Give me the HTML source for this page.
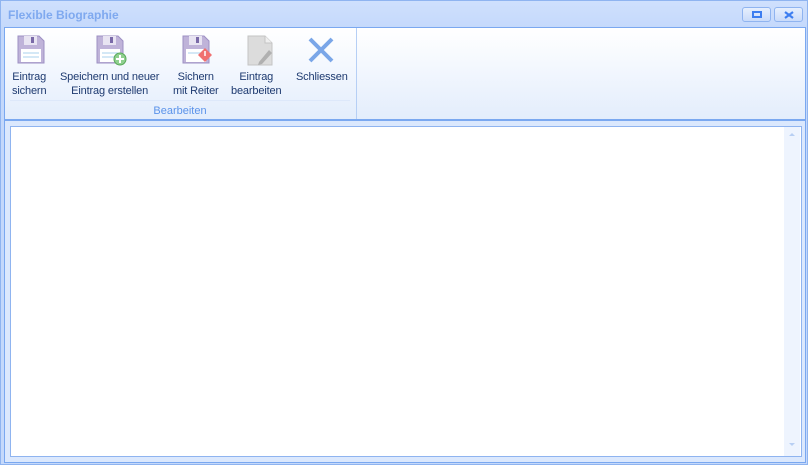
<!DOCTYPE html>
<html><head><style>
*{margin:0;padding:0;box-sizing:border-box}
body{width:808px;height:465px;overflow:hidden;background:#fff;font-family:"Liberation Sans",Tahoma,sans-serif;font-size:11px;position:relative}
.win{position:absolute;left:0;top:0;width:808px;height:465px;border:1px solid #8fb4f0;background:linear-gradient(#cfe0fd,#c3d8fb 30px,#c5d9fb);}
.title{position:absolute;left:7px;top:7px;font-weight:bold;font-size:12px;color:#7fa9ef}
.btn{position:absolute;top:6px;width:29px;height:15px;border:1px solid #8fb4f0;border-radius:3px;background:linear-gradient(#e6effd,#c9dbfa)}
.rib{position:absolute;left:3px;top:26px;width:802px;height:93px;border:1px solid #7aa8f0;background:linear-gradient(#fff,#f4f8fe 40%,#e3edfc)}
.sep{position:absolute;left:351px;top:0;width:1px;height:91px;background:#b6cff5}
.item{position:absolute;top:42px;text-align:center;color:#1e3a70;line-height:14px;white-space:nowrap;letter-spacing:-0.15px}
.grp{position:absolute;left:5px;top:72px;width:340px;border-top:1px solid #dde8fa;text-align:center;color:#5b93ea;padding-top:4px}
.panel{position:absolute;left:3px;top:119px;width:802px;height:343px;border:1px solid #7aa8f0;background:#dbe8fd}
.inner{position:absolute;left:5px;top:5px;width:792px;height:331px;border:1px solid #8fb4f0;background:#fff}
.sb{position:absolute;right:1px;top:0;width:16px;height:329px;background:#eef4fe}
svg{position:absolute}
</style></head><body>
<div class="win">
<div class="title">Flexible Biographie</div>
<div class="btn" style="left:741px"><div style="position:absolute;left:9px;top:3px;width:10px;height:7px;border:2px solid #3d7ef0"></div></div>
<div class="btn" style="left:773px"><svg width="29" height="15" style="left:0;top:0"><path d="M10 4 L18 10 M18 4 L10 10" stroke="#3d7ef0" stroke-width="2.2"/></svg></div>
<div class="rib">
<svg width="32" height="32" style="left:10px;top:6px"><path d="M3 2 H24 L29 7 V29 H3 Z" fill="#bfb3d9" stroke="#9d90c4"/><rect x="9" y="2" width="13" height="9" fill="#e8e4f2"/><rect x="16" y="3" width="3" height="6" fill="#7a6aa8"/><rect x="6" y="15" width="20" height="13" fill="#fff"/><path d="M8 19H24M8 23H24" stroke="#a8d0ee"/></svg>
<svg width="34" height="34" style="left:89px;top:6px"><path d="M3 2 H24 L29 7 V29 H3 Z" fill="#bfb3d9" stroke="#9d90c4"/><rect x="9" y="2" width="13" height="9" fill="#e8e4f2"/><rect x="16" y="3" width="3" height="6" fill="#7a6aa8"/><rect x="6" y="15" width="20" height="13" fill="#fff"/><path d="M8 19H24M8 23H24" stroke="#a8d0ee"/><circle cx="26" cy="25" r="6" fill="#8fd08f" stroke="#5aa85a"/><path d="M26 21V29M22 25H30" stroke="#fff" stroke-width="2"/></svg>
<svg width="34" height="34" style="left:175px;top:6px"><path d="M3 2 H24 L29 7 V29 H3 Z" fill="#bfb3d9" stroke="#9d90c4"/><rect x="9" y="2" width="13" height="9" fill="#e8e4f2"/><rect x="16" y="3" width="3" height="6" fill="#7a6aa8"/><rect x="6" y="15" width="20" height="13" fill="#fff"/><path d="M8 19H24" stroke="#a8d0ee"/><path d="M25 14 L32 21 L25 28 L18 21Z" fill="#f07070"/><path d="M25 17V22" stroke="#fff" stroke-width="1.5"/></svg>
<svg width="32" height="34" style="left:240px;top:6px"><path d="M3 2 H20 L27 9 V31 H3 Z" fill="#dcdcdc" stroke="#c4c4c4"/><path d="M20 2V9H27" fill="#efefef" stroke="#c4c4c4"/><path d="M14 28 L24 16 L27 19 L17 30 L13 31Z" fill="#b0b0b0"/></svg>
<svg width="30" height="30" style="left:302px;top:8px"><path d="M3 3 L25 25 M25 3 L3 25" stroke="#7aa6e8" stroke-width="4"/></svg>
<div class="item" style="left:7px">Eintrag<br>sichern</div>
<div class="item" style="left:55px">Speichern und neuer<br>Eintrag erstellen</div>
<div class="item" style="left:168px">Sichern<br>mit Reiter</div>
<div class="item" style="left:226px">Eintrag<br>bearbeiten</div>
<div class="item" style="left:291px;">Schliessen</div>
<div class="grp">Bearbeiten</div>
<div class="sep"></div>
</div>
<div class="panel"><div class="inner"><div class="sb">
<svg width="16" height="329" style="left:0;top:0"><path d="M5 9H11L8 6Z" fill="#b8cff3"/><path d="M5 316H11L8 319Z" fill="#b8cff3"/></svg>
</div></div></div>
</div>
</body></html>
